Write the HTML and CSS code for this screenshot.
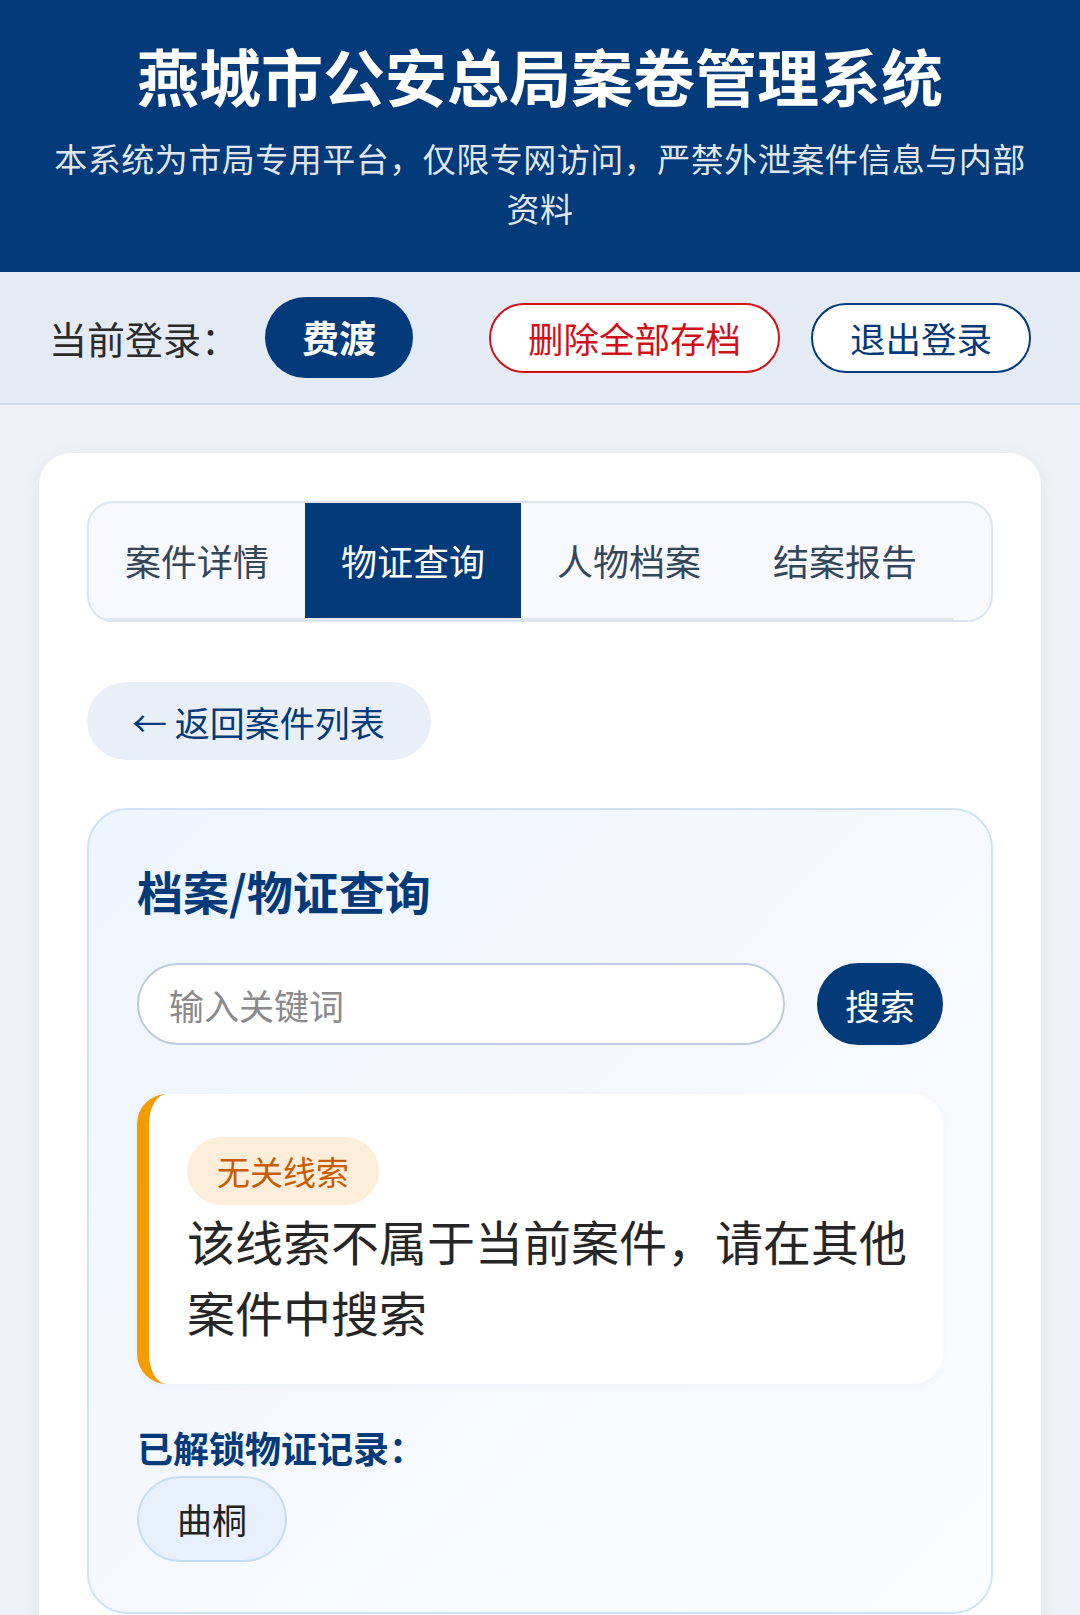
FILE: index.html
```html
<!DOCTYPE html>
<html lang="zh-CN">
<head>
    <meta charset="UTF-8">
    <meta name="viewport" content="width=device-width, initial-scale=1.0">
    <title>燕城市公安总局案卷管理系统</title>
    <link rel="stylesheet" href="styles.css">
</head>
<body>
    <header class="site-header">
        <h1 class="site-title">燕城市公安总局案卷管理系统</h1>
        <p class="site-desc">本系统为市局专用平台，仅限专网访问，严禁外泄案件信息与内部资料</p>
    </header>

    <div class="user-bar">
        <div class="user-info">
            <span class="user-label">当前登录：</span>
            <span class="user-name">费渡</span>
        </div>
        <div class="user-actions">
            <button class="btn-outline btn-danger">删除全部存档</button>
            <button class="btn-outline">退出登录</button>
        </div>
    </div>

    <main class="page">
        <div class="case-card">
            <div class="tabs">
                <div class="tab-strip">
                    <div class="tab">案件详情</div>
                    <div class="tab active">物证查询</div>
                    <div class="tab">人物档案</div>
                    <div class="tab">结案报告</div>
                </div>
            </div>

            <button class="back-btn">← 返回案件列表</button>

            <section class="search-panel">
                <h2 class="panel-title">档案/物证查询</h2>
                <div class="search-row">
                    <input type="text" class="search-input" placeholder="输入关键词">
                    <button class="search-btn">搜索</button>
                </div>

                <div class="result-card">
                    <span class="result-tag">无关线索</span>
                    <p class="result-text">该线索不属于当前案件，请在其他案件中搜索</p>
                </div>

                <div class="unlocked-label">已解锁物证记录：</div>
                <div class="chip-list">
                    <span class="chip">曲桐</span>
                </div>
            </section>
        </div>
    </main>
</body>
</html>
```

FILE: styles.css
```css
body {
    margin: 0;
    background: #eef1f5;
    font-family: "Noto Sans CJK SC", "Noto Sans", sans-serif;
    color: #262626;
}
button, input {
    font-family: inherit;
}

.site-header {
    background: #023a7a;
    color: #fff;
    text-align: center;
    padding: 35px 46px 39px;
}
.site-title {
    margin: 0;
    font-size: 62px;
    line-height: 80px;
    font-weight: 700;
}
.site-desc {
    margin: 18px 0 0;
    font-size: 33px;
    line-height: 50px;
    letter-spacing: 0.5px;
    color: rgba(255, 255, 255, 0.9);
}

.user-bar {
    display: flex;
    align-items: center;
    justify-content: space-between;
    padding: 25px 49px;
    background: #e4ebf5;
    border-bottom: 2px solid #d2dbe8;
}
.user-info {
    display: flex;
    align-items: center;
    gap: 26px;
}
.user-label {
    font-size: 38px;
    color: #2b2b2b;
}
.user-name {
    display: inline-block;
    height: 81px;
    line-height: 81px;
    padding: 0 37px;
    border-radius: 41px;
    background: #023a7a;
    color: #fff;
    font-size: 37px;
    font-weight: 700;
}
.user-actions {
    display: flex;
    gap: 31px;
}
.btn-outline {
    height: 70px;
    padding: 0 37px;
    border: 2px solid #023a7a;
    border-radius: 35px;
    background: #fff;
    color: #023a7a;
    font-size: 35.5px;
    line-height: 1;
    cursor: pointer;
}
.btn-danger {
    border-color: #d0111b;
    color: #d0111b;
}

.page {
    padding: 48px 39px 0;
}
.case-card {
    background: #fff;
    border-radius: 32px;
    padding: 48px 48px 60px;
    box-shadow: 0 4px 18px rgba(0, 40, 100, 0.06);
}

.tabs {
    border: 2px solid #dce5ef;
    border-radius: 26px;
    background: #f7f9fc;
    overflow: hidden;
}
.tab-strip {
    display: flex;
    width: max-content;
    border-bottom: 2px solid #e3e9f1;
}
.tab {
    width: 144px;
    padding: 0 36px;
    line-height: 115px;
    font-size: 36px;
    color: #34465a;
    text-align: center;
    white-space: nowrap;
}
.tab.active {
    background: #023a7a;
    color: #fff;
}

.back-btn {
    display: inline-block;
    margin-top: 60px;
    height: 78px;
    padding: 0 46px 0 45px;
    border: none;
    border-radius: 39px;
    background: #e9eff7;
    color: #023a7a;
    font-size: 35px;
    cursor: pointer;
}

.search-panel {
    margin-top: 48px;
    padding: 50px 48px;
    border: 2px solid #cfe3f6;
    border-radius: 40px;
    background: linear-gradient(135deg, #edf5fe 0%, #f6f9fe 55%, #fafcff 100%);
}
.panel-title {
    margin: 0;
    font-size: 46px;
    line-height: 60px;
    font-weight: 700;
    color: #023a7a;
}
.search-row {
    display: flex;
    gap: 32px;
    margin-top: 43px;
}
.search-input {
    flex: 1;
    height: 82px;
    box-sizing: border-box;
    padding: 0 30px;
    border: 2px solid #bccbdd;
    border-radius: 41px;
    background: #fff;
    font-size: 35px;
    outline: none;
}
.search-input::placeholder {
    color: #8a8a8a;
}
.search-btn {
    height: 82px;
    padding: 0 28px;
    border: none;
    border-radius: 41px;
    background: #023a7a;
    color: #fff;
    font-size: 35px;
    cursor: pointer;
}

.result-card {
    margin-top: 49px;
    padding: 43px 30px 37px 38px;
    background: #fff;
    border-left: 12px solid #f29c00;
    border-radius: 30px;
    box-shadow: 0 2px 10px rgba(0, 40, 100, 0.03);
}
.result-tag {
    display: inline-block;
    padding: 10px 30px;
    line-height: 48px;
    border-radius: 34px;
    background: #fdeedc;
    color: #c95c00;
    font-size: 33px;
}
.result-text {
    margin: 0;
    font-size: 48px;
    line-height: 71px;
    color: #262626;
}

.unlocked-label {
    margin-top: 39px;
    font-size: 36px;
    line-height: 48px;
    font-weight: 700;
    color: #023a7a;
}
.chip-list {
    display: flex;
    gap: 16px;
    margin-top: 5px;
}
.chip {
    display: inline-block;
    height: 86px;
    box-sizing: border-box;
    line-height: 82px;
    padding: 0 38px;
    border: 2px solid #c6def4;
    border-radius: 43px;
    background: #e8f0fd;
    font-size: 35px;
    color: #222;
}
```
